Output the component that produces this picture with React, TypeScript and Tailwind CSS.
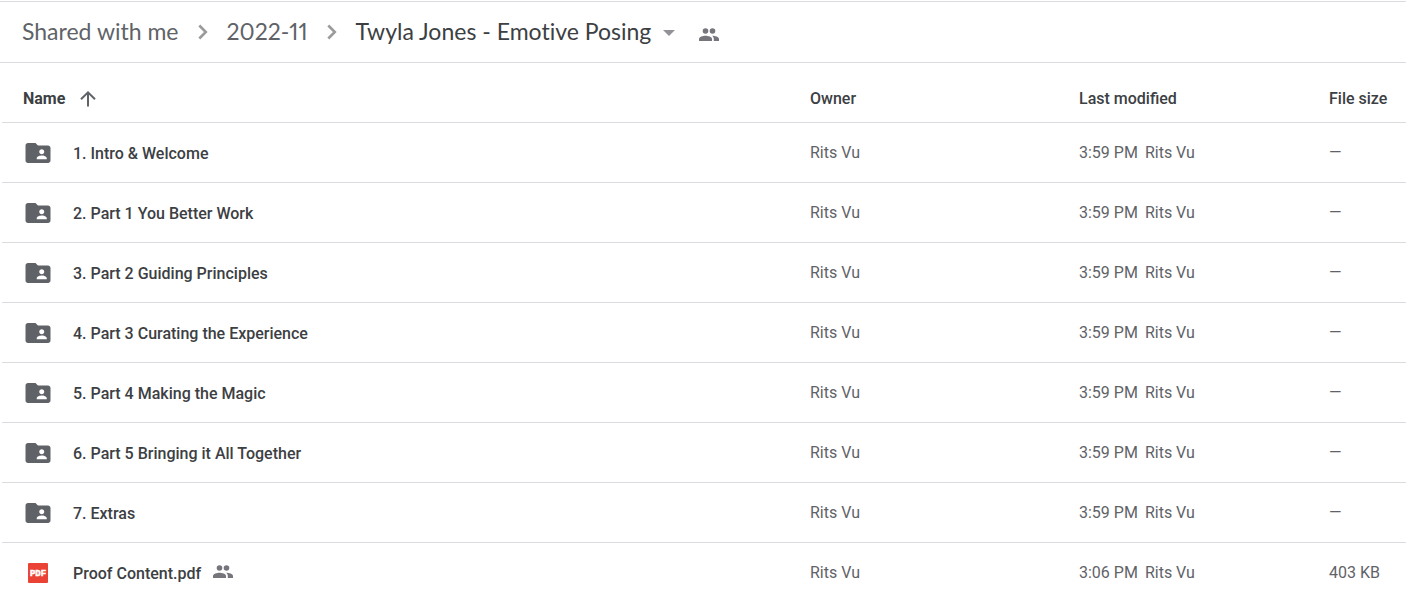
import type { ReactNode } from "react";

interface DriveItem {
  name: string;
  kind: "folder" | "pdf";
  owner: string;
  modified: string;
  modifiedBy: string;
  size: string;
  shared?: boolean;
}

const folderNames = [
  "1. Intro & Welcome",
  "2. Part 1 You Better Work",
  "3. Part 2 Guiding Principles",
  "4. Part 3 Curating the Experience",
  "5. Part 4 Making the Magic",
  "6. Part 5 Bringing it All Together",
  "7. Extras",
];

const items: DriveItem[] = [
  ...folderNames.map(
    (name): DriveItem => ({
      name,
      kind: "folder",
      owner: "Rits Vu",
      modified: "3:59 PM",
      modifiedBy: "Rits Vu",
      size: "—",
    }),
  ),
  {
    name: "Proof Content.pdf",
    kind: "pdf",
    owner: "Rits Vu",
    modified: "3:06 PM",
    modifiedBy: "Rits Vu",
    size: "403 KB",
    shared: true,
  },
];

export default function App() {
  return (
    <main className="h-screen overflow-hidden bg-white pt-px font-['Roboto',sans-serif] text-base text-[#3c4043]">
      <Breadcrumbs />
      <FileTable />
    </main>
  );
}

function Breadcrumbs() {
  return (
    <nav
      aria-label="Breadcrumb"
      className="flex h-[62px] items-center border-y border-[#dadce0] pl-[22px] font-['Lato',sans-serif] text-[23px] proportional-nums text-[#5f6368] [font-variant-ligatures:none]"
    >
      <Crumb>Shared with me</Crumb>
      <ChevronIcon />
      <Crumb>2022-11</Crumb>
      <ChevronIcon />
      <button className="flex items-center gap-3 text-[#3c4043]" type="button">
        <span className="pb-0.5">Twyla Jones - Emotive Posing</span>
        <svg aria-hidden="true" className="mt-0.5 h-2 w-3" viewBox="0 0 12 8">
          <path d="M0 1h12L6 7z" fill="#919396" />
        </svg>
      </button>
      <button aria-label="Manage people" className="ml-6 pt-1.5" type="button">
        <PeopleIcon />
      </button>
    </nav>
  );
}

function Crumb({ children }: { children: ReactNode }) {
  return (
    <a className="pb-0.5" href="#">
      {children}
    </a>
  );
}

function FileTable() {
  return (
    <div className="pl-0.5">
      <table className="w-full table-fixed border-collapse text-left">
        <thead>
          <tr className="h-[59px] border-b border-[#dadce0]">
            <th className="pt-3.5 pl-[21px] font-medium">
              <button
                className="flex items-center gap-3 font-bold"
                type="button"
              >
                Name
                <SortIcon />
              </button>
            </th>
            <th className="w-[269px] pt-3.5 font-medium">Owner</th>
            <th className="w-[250px] pt-3.5 font-medium">Last modified</th>
            <th className="w-[77px] pt-3.5 font-medium">File size</th>
          </tr>
        </thead>
        <tbody>
          {items.map((item) => (
            <FileRow item={item} key={item.name} />
          ))}
        </tbody>
      </table>
    </div>
  );
}

function FileRow({ item }: { item: DriveItem }) {
  return (
    <tr className="h-[60px] border-b border-[#dadce0] text-[#5f6368]">
      <td className="pt-0.5 pl-[21px]">
        <div className="flex items-center">
          {item.kind === "folder" ? <FolderIcon /> : <PdfIcon />}
          <a className="ml-5 pt-0.5 font-medium text-[#3c4043]" href="#">
            {item.name}
          </a>
          {item.shared && (
            <span className="ml-3 pb-0.5">
              <PeopleIcon />
            </span>
          )}
        </div>
      </td>
      <td className="pt-0.5">{item.owner}</td>
      <td className="pt-0.5">
        <span className="mr-[7px]">{item.modified}</span>
        <span>{item.modifiedBy}</span>
      </td>
      <td className="pt-0.5">{item.size}</td>
    </tr>
  );
}

function ChevronIcon() {
  return (
    <svg aria-hidden="true" className="mx-[19px] h-4 w-2.5" viewBox="0 0 10 16">
      <path
        d="M1.3 1.5L7.8 8l-6.5 6.5"
        fill="none"
        stroke="#9a9b9d"
        strokeWidth="2.6"
      />
    </svg>
  );
}

function SortIcon() {
  return (
    <svg aria-hidden="true" className="size-5" viewBox="0 0 20 20">
      <path
        d="M11 17.5V3.5M4 10.2L11 3.3l7 6.9"
        fill="none"
        stroke="#5f6368"
        strokeWidth="2"
      />
    </svg>
  );
}

function FolderIcon() {
  return (
    <svg
      aria-hidden="true"
      className="size-[30px] shrink-0"
      fill="#5f6368"
      viewBox="0 0 24 24"
    >
      <path d="M20 6h-8l-2-2H4c-1.1 0-1.99.9-1.99 2L2 18c0 1.1.9 2 2 2h16c1.1 0 2-.9 2-2V8c0-1.1-.9-2-2-2zm-5 3c1.1 0 2 .9 2 2s-.9 2-2 2-2-.9-2-2 .9-2 2-2zm4 8h-8v-1c0-1.33 2.67-2 4-2s4 .67 4 2v1z" />
    </svg>
  );
}

function PdfIcon() {
  return (
    <svg
      aria-hidden="true"
      className="size-[30px] shrink-0"
      viewBox="0 0 30 30"
    >
      <rect fill="#ea4335" height="20" rx="1" width="20" x="5" y="5" />
      <text
        className="font-['Liberation_Mono',monospace] text-[9px] font-bold"
        fill="#fff"
        stroke="#fff"
        strokeWidth="0.5"
        textAnchor="middle"
        x="15"
        y="18"
      >
        PDF
      </text>
    </svg>
  );
}

function PeopleIcon() {
  return (
    <svg
      aria-hidden="true"
      className="h-3.5 w-5"
      fill="#77757c"
      viewBox="0 0 20 14"
    >
      <circle cx="6.5" cy="3" r="2.8" />
      <circle cx="13.5" cy="3" r="2.8" />
      <path d="M0 13v-2c0-2.4 4-3.3 6.5-3.3s6.5.9 6.5 3.3v2z" />
      <path d="M13.2 7.7c2.8 0 6.8 1.1 6.8 3.3v2h-5.2v-2c0-1.5-.6-2.5-1.6-3.3z" />
    </svg>
  );
}
